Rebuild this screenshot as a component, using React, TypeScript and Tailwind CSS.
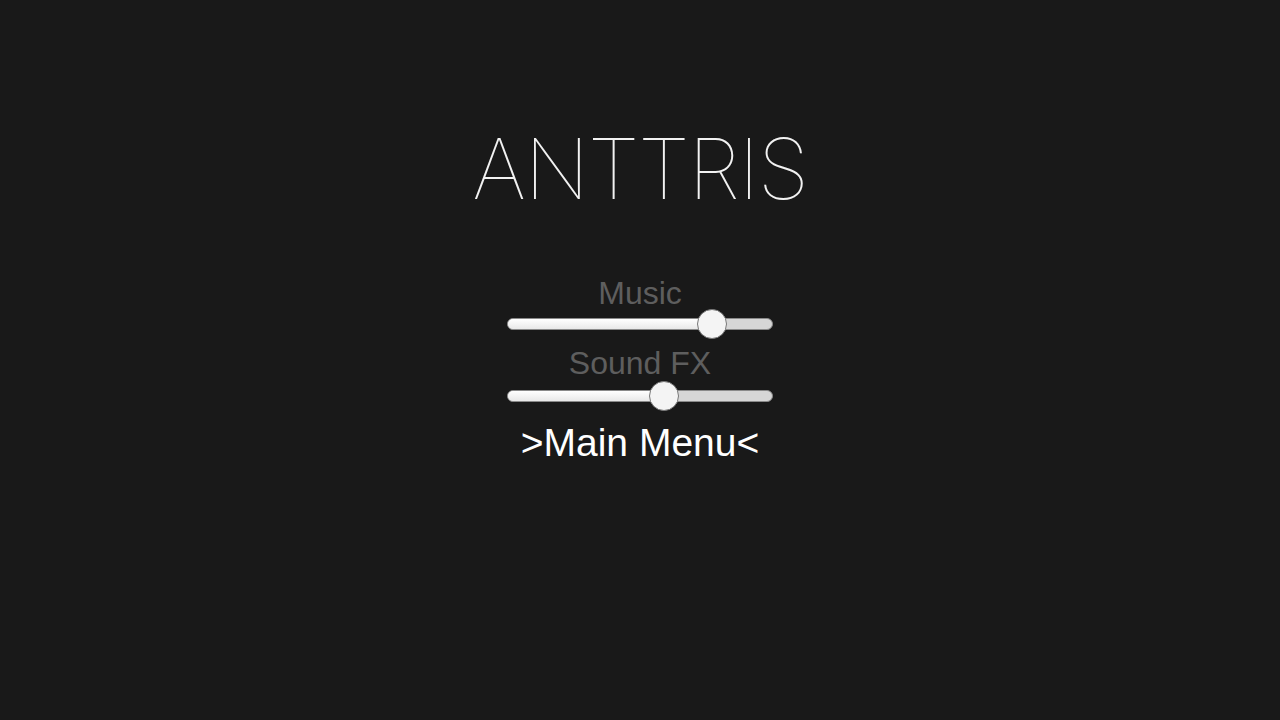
import React from "react";

function Slider({ value }: { value: number }) {
  return (
    <div className="relative w-[266px] h-[30px] flex items-center">
      <div className="w-full h-[12px] rounded-full bg-[#d6d6d6] overflow-hidden border border-[#8a8a8a]">
        <div className="h-full bg-gradient-to-b from-[#ffffff] to-[#e8e8e8]" style={{ width: `${value}%` }} />
      </div>
      <div
        className="absolute top-0 w-[30px] h-[30px] rounded-full bg-[#f4f4f4] border border-[#777]"
        style={{ left: `calc(${value}% - 15px)` }}
      />
    </div>
  );
}

export default function App() {
  return (
    <div className="w-[1280px] h-[720px] bg-[#191919] flex flex-col items-center" style={{ fontFamily: '"Liberation Sans", Arial, sans-serif' }}>
      <div className="mt-[127px] text-[84px] leading-[84px] text-[#f2f2f2] tracking-[-1.5px]" style={{ fontFamily: 'Inter, "Liberation Sans", sans-serif', fontWeight: 100 }}>
        ANTTRIS
      </div>
      <div className="mt-[64px] text-[32px] leading-[36px] text-[#5e5e5e]">Music</div>
      <div className="mt-[-2px]">
        <Slider value={77} />
      </div>
      <div className="mt-[6px] text-[32px] leading-[36px] text-[#5e5e5e]">Sound FX</div>
      <div className="mt-[0px]">
        <Slider value={59} />
      </div>
      <div className="mt-[10px] text-[39px] leading-[44px] text-white">&gt;Main Menu&lt;</div>
    </div>
  );
}
